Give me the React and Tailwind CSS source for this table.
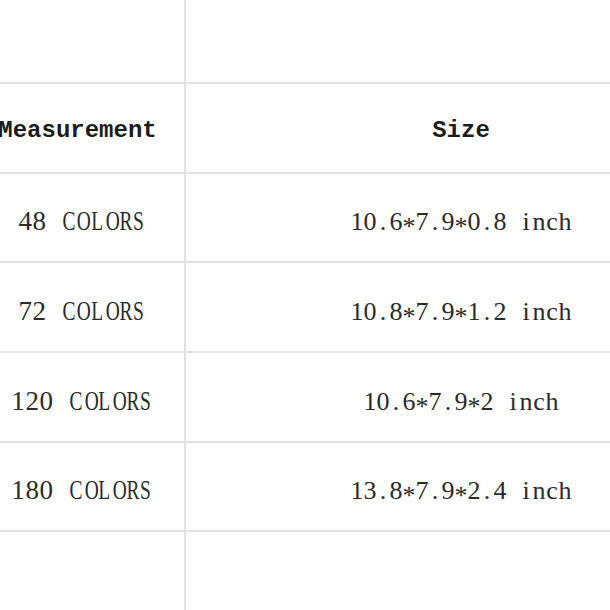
const rows = [
  { count: '48 COLORS', size: '10.6*7.9*0.8 inch' },
  { count: '72 COLORS', size: '10.8*7.9*1.2 inch' },
  { count: '120 COLORS', size: '10.6*7.9*2 inch' },
  { count: '180 COLORS', size: '13.8*7.9*2.4 inch' },
]

const serif = { fontFamily: '"Liberation Serif", "Times New Roman", serif' }
const mono = { fontFamily: '"Liberation Mono", "Courier New", monospace' }

function Cells({ text, wide }) {
  return (
    <span className="whitespace-nowrap" style={serif}>
      {text.split('').map((ch, i) => {
        const caps = /[A-Z]/.test(ch)
        const star = ch === '*'
        return (
          <span key={i} className={`inline-block text-center ${wide ? 'w-[14.1px]' : 'w-[13px]'}`}>
            <span
              className={`inline-block ${caps ? 'scale-x-[0.72]' : ''} ${star ? 'translate-y-[5px]' : ''}`}
            >
              {ch === ' ' ? '\u00a0' : ch}
            </span>
          </span>
        )
      })}
    </span>
  )
}

function Row({ h, children }) {
  return (
    <div className={`grid grid-cols-[207px_550px] border-b-2 border-[#e2e2e2] ${h}`}>
      {children}
    </div>
  )
}

export default function App() {
  return (
    <div className="w-[610px] h-[610px] overflow-hidden bg-white">
      <div className="-ml-[21px] w-[757px]">
        <Row h="h-[84px]">
          <div className="border-r-2 border-[#e2e2e2]" />
          <div />
        </Row>

        <Row h="h-[90px]">
          <div
            className="flex items-center justify-center border-r-2 border-[#e2e2e2] pt-[6px] pr-[8px] text-[24px] font-bold text-[#1c1c1c]"
            style={mono}
          >
            Measurement
          </div>
          <div className="flex items-center justify-center pt-[6px] text-[24px] font-bold text-[#1c1c1c]" style={mono}>
            Size
          </div>
        </Row>

        {rows.map((r, i) => (
          <Row key={r.count} h={i % 3 === 0 ? 'h-[89px]' : 'h-[90px]'}>
            <div className="flex items-center justify-center border-r-2 border-[#e2e2e2] pt-[8px] text-[27px] text-[#2b2b2b]">
              <Cells text={r.count} wide />
            </div>
            <div className="flex items-center justify-center pt-[8px] text-[26px] text-[#2b2b2b]">
              <Cells text={r.size} />
            </div>
          </Row>
        ))}

        <div className="grid grid-cols-[207px_550px] h-[100px]">
          <div className="border-r-2 border-[#e2e2e2]" />
          <div />
        </div>
      </div>
    </div>
  )
}
